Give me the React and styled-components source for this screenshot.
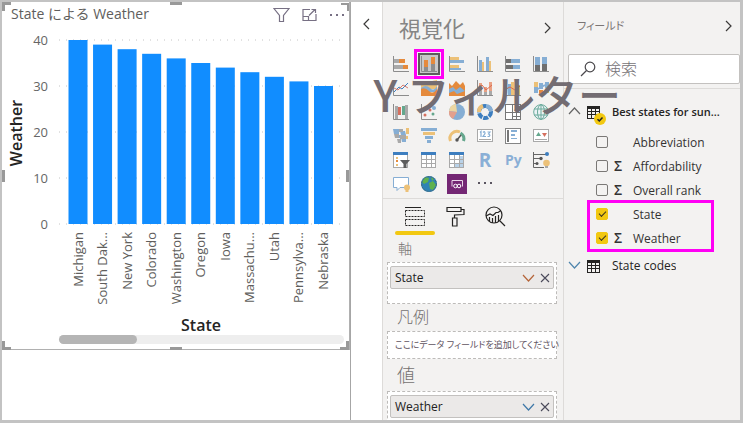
import React from 'react';
import styled, { createGlobalStyle, css } from 'styled-components';

const uiFont = '"Open Sans", "Noto Sans CJK JP", sans-serif';
const line = '#dddbd9';

const GlobalStyle = createGlobalStyle`
  * { box-sizing: border-box; }
  body { margin: 0; font-family: ${uiFont}; font-size: 12px; color: #333; }
  button, input { font: inherit; color: inherit; }
  button { border: 0; padding: 0; background: none; cursor: pointer; }
  svg { display: block; }
`;

const Shell = styled.main`
  position: relative;
  display: grid;
  grid-template-columns: minmax(0, 1fr) 32px 181px 177px;
  height: 100vh;
  border: solid #c3c3c3;
  border-width: 2px 3px 3px 2px;
  background: #fff;
  overflow: hidden;
`;

/* ---------- report canvas ---------- */

const Canvas = styled.section`
  min-width: 0;
`;

const Visual = styled.article`
  position: relative;
  border-right: 1px solid #b0b0b0;
  border-bottom: 1px solid #b0b0b0;
  padding-bottom: 5px;
`;

const VisualHeader = styled.header`
  display: flex;
  align-items: center;
  justify-content: space-between;
  height: 24px;
  padding: 0 4px 0 9px;
`;

const VisualTitle = styled.h2`
  margin: 0;
  font-size: 14px;
  line-height: 20px;
  font-weight: 400;
  color: #605e5c;
  white-space: nowrap;
`;

const VisualTools = styled.div`
  display: flex;
  align-items: center;
  gap: 12px;
  padding-top: 2px;
`;

const Plot = styled.svg`
  width: 100%;
  height: auto;
  font-family: ${uiFont};
`;

const ScrollTrack = styled.div`
  height: 9px;
  margin: 0 5px 0 57px;
  border-radius: 5px;
  background: #eeeeee;
`;

const ScrollThumb = styled.div`
  width: 78px;
  height: 9px;
  border-radius: 5px;
  background: #b5b5b5;
`;

const handlePlace = {
  nw: 'left: 0; top: 0; width: 9px; height: 9px; border-width: 3px 0 0 3px;',
  n: 'left: calc(50% - 6px); top: 0; width: 12px; height: 3px; border-width: 3px 0 0;',
  ne: 'right: 0; top: 1px; width: 8px; height: 8px; border-width: 2px 2px 0 0;',
  w: 'left: 0; top: calc(50% - 6px); width: 3px; height: 12px; border-width: 0 0 0 3px;',
  e: 'right: 0; top: calc(50% - 6px); width: 3px; height: 12px; border-width: 0 3px 0 0;',
  sw: 'left: 0; bottom: -1px; width: 9px; height: 9px; border-width: 0 0 3px 3px;',
  s: 'left: calc(50% - 6px); bottom: -1px; width: 12px; height: 3px; border-width: 0 0 3px;',
  se: 'right: 0; bottom: -1px; width: 9px; height: 9px; border-width: 0 3px 3px 0;',
};

const Handle = styled.span`
  position: absolute;
  border: 0 solid #999;
  ${({ $at }) => handlePlace[$at]}
`;

/* ---------- panes ---------- */

const FilterRail = styled.aside`
  display: flex;
  justify-content: center;
  align-items: flex-start;
  padding-top: 16px;
  border-left: 1px solid #a6a6a6;
`;

const Pane = styled.aside`
  min-width: 0;
  overflow: hidden;
  background: #f3f2f1;
  border-left: 1px solid ${line};
`;

const PaneHeader = styled.header`
  display: flex;
  align-items: center;
  justify-content: space-between;
  height: ${({ $tall }) => ($tall ? 54 : 52)}px;
  padding: 0 ${({ $tall }) => ($tall ? '12px 3px 16px' : '8px 5px 13px')};
  color: ${({ $tall }) => ($tall ? '#858585' : '#7a7574')};
`;

const PaneTitle = styled.h1`
  margin: 0;
  font-size: ${({ $large }) => ($large ? 22 : 11)}px;
  line-height: 24px;
  font-weight: 400;
  font-feature-settings: ${({ $large }) => ($large ? 'normal' : '"palt"')};
  white-space: nowrap;
`;

const FilterTitle = styled.h1`
  position: absolute;
  right: 119px;
  top: 65px;
  margin: 0;
  font-size: 43px;
  line-height: 52px;
  font-weight: 500;
  font-family: "Noto Sans CJK JP", sans-serif;
  color: #736c72;
  white-space: nowrap;
  pointer-events: none;
`;

const IconGrid = styled.div`
  display: grid;
  grid-template-columns: repeat(6, 16px);
  gap: 8px 12px;
  padding: 0 0 6px 10px;
  border-bottom: 1px solid ${line};
`;

const VizButton = styled.button`
  width: 16px;
  height: 16px;
  ${({ $selected }) =>
    $selected &&
    css`
      background: #c8c8c8;
      outline: 2px solid #5c5c5c;
      outline-offset: 1px;
      box-shadow: 0 0 0 1px #c8c8c8, 0 0 0 4px #f3f2f1, 0 0 0 7px #ff00f5;
    `}
`;

const Letters = styled.span`
  display: block;
  font-size: ${({ $big }) => ($big ? 19 : 14)}px;
  line-height: 16px;
  font-weight: 700;
  color: #8aafd6;
  white-space: nowrap;
`;

const Tabs = styled.nav`
  display: flex;
  padding-left: 12px;
`;

const Tab = styled.button`
  display: flex;
  justify-content: center;
  width: 40px;
  height: 36px;
  padding-top: 7px;
  position: relative;
  ${({ $active }) =>
    $active &&
    css`
      &::after {
        content: '';
        position: absolute;
        inset: auto 0 0;
        height: 4px;
        border-radius: 2px;
        background: #f2c811;
      }
    `}
`;

const WellLabel = styled.h3`
  margin: 0;
  padding-left: ${({ $size }) => ($size > 14 ? 14 : 15)}px;
  font-size: ${({ $size }) => $size}px;
  line-height: ${({ $size }) => ($size > 16 ? 32 : 27)}px;
  font-weight: 300;
  color: #757170;
`;

const Well = styled.div`
  margin: 0 6px 0 4px;
  padding: 3px 2px ${({ $empty }) => ($empty ? 3 : 14)}px;
  border: 1px dashed #bdbbb9;
  background: #fff;
`;

const Chip = styled.div`
  display: flex;
  align-items: center;
  height: 23px;
  padding: 0 3px 0 4px;
  border: 1px solid #c3c1bf;
  border-radius: 2px;
  background: #ebe9e8;
  gap: 5px;
`;

const ChipName = styled.span`
  flex: 1;
  color: #222;
`;

const Hint = styled.p`
  margin: 0;
  padding-left: 5px;
  font-size: 9px;
  line-height: 20px;
  font-feature-settings: "palt";
  color: #5f545f;
  white-space: nowrap;
`;

const SearchBox = styled.label`
  display: flex;
  align-items: center;
  gap: 9px;
  height: 30px;
  margin-left: 4px;
  padding-left: 11px;
  border: 1px solid #c3c1bf;
  border-radius: 2px;
  background: #fff;
`;

const SearchInput = styled.input`
  flex: 1;
  min-width: 0;
  border: 0;
  outline: 0;
  padding: 0;
  background: none;
  font-size: 16px;
  line-height: 24px;
  font-weight: 300;
  &::placeholder { color: #767276; opacity: 1; }
`;

const FieldTree = styled.div`
  margin-top: 4px;
  padding-top: 7px;
  border-top: 1px solid ${line};
`;

const TableRow = styled.button`
  display: flex;
  align-items: center;
  width: 100%;
  height: 30px;
  padding-left: 4px;
  color: #252423;
  font-size: ${({ $open }) => ($open ? 11 : 12)}px;
  font-weight: ${({ $open }) => ($open ? 600 : 400)};
`;

const TableIconSlot = styled.span`
  width: 25px;
  margin-left: 6px;
`;

const TableName = styled.span`
  overflow: hidden;
  white-space: nowrap;
  text-overflow: ellipsis;
`;

const FieldList = styled.ul`
  list-style: none;
  margin: 0;
  padding: 4px 0 0;
`;

const FieldGroup = styled.li`
  ${({ $marked }) =>
    $marked &&
    css`
      width: 123px;
      margin-left: 25px;
      outline: 3px solid #ff00f5;
      outline-offset: -1px;
      & > label { padding-left: 7px; }
    `}
`;

const FieldRow = styled.label`
  display: grid;
  grid-template-columns: 12px 25px 1fr;
  align-items: center;
  height: 24px;
  padding-left: 32px;
  color: #333;
  white-space: nowrap;
`;

const Tick = styled.input`
  appearance: none;
  position: relative;
  width: 12px;
  height: 12px;
  margin: 0;
  border: 1px solid #7a7876;
  border-radius: 2px;
  &:checked {
    border-color: #f2c811;
    background: #f2c811;
  }
  &:checked::after {
    content: '';
    position: absolute;
    left: 2px;
    top: 2px;
    width: 6px;
    height: 3px;
    border: solid #3a3420;
    border-width: 0 0 1px 1px;
    transform: rotate(-45deg);
  }
`;

const Sigma = styled.span`
  padding-left: 6px;
  font: 600 14px/24px "Open Sans", sans-serif;
  color: #333;
`;

/* ---------- drawings ---------- */

const Chevron = ({ dir, color = '#3b3a39', w = 7, h = 12 }) => {
  const d = {
    left: `M${w - 1} 1L1 ${h / 2}L${w - 1} ${h - 1}`,
    right: `M1 1L${w - 1} ${h / 2}L1 ${h - 1}`,
    up: `M1 ${h - 1}L${w / 2} 1L${w - 1} ${h - 1}`,
    down: `M1 1L${w / 2} ${h - 1}L${w - 1} 1`,
  }[dir];
  return (
    <svg width={w} height={h} fill="none" stroke={color} strokeWidth="1.2">
      <path d={d} />
    </svg>
  );
};

const FunnelIcon = () => (
  <svg width="17" height="16" fill="none" stroke="#777084" strokeWidth="1.2">
    <path d="M1 1.5H16L10.500 8.500V14.500H6.500V8.500Z" />
  </svg>
);
const FocusIcon = () => (
  <svg width="15" height="14" fill="none" stroke="#777084" strokeWidth="1.2">
    <path d="M8 1.500H1V12.500H14V6M1 8.500H6.500V12.500M7 7.500L13 1.500M9.500 1.500H13.500V5" />
  </svg>
);
const MoreIcon = () => (
  <svg width="16" height="4" fill="#777084">
    <path d="M1 1h2v2H1zM7 1h2v2H7zM13 1h2v2h-2z" />
  </svg>
);
const CloseIcon = () => (
  <svg width="10" height="10" fill="none" stroke="#4a4a5a" strokeWidth="1.1">
    <path d="M1 1L9 9M9 1L1 9" />
  </svg>
);
const SearchIcon = () => (
  <svg width="16" height="16" fill="none" stroke="#4a484c" strokeWidth="1.2">
    <circle cx="10" cy="6" r="4.800" />
    <path d="M6.500 9.500L1 15" />
  </svg>
);
const TableIcon = ({ badge }) => (
  <svg width="20" height="24" viewBox="0 -3 20 24" overflow="visible">
    <path fill="#252423" d="M0 4h13v13H0z" />
    <path fill="#f3f2f1" d="M1 7h3v2H1zM5 7h3v2H5zM9 7h3v2H9zM1 10h3v2H1zM5 10h3v2H5zM9 10h3v2H9zM1 13h3v3H1zM5 13h3v3H5zM9 13h3v3H9z" />
    {badge && (
      <>
        <circle cx="13" cy="17" r="6" fill="#f2c811" />
        <path d="M10.500 17.200L12.300 19L15.500 15.500" fill="none" stroke="#252423" strokeWidth="1.500" />
      </>
    )}
  </svg>
);

const O = '#e58a3c';
const B = '#86aed4';
const Y = '#ecc178';
const G = '#a9a9a9';
const D = '#6f6f6f';
const K = '#3d7ebf';
const Axis = () => <path d="M.5 0V15.500H16" fill="none" stroke="#8c8c8c" />;
const P = ({ f, d }) => <path fill={f} d={d} />;
const S = ({ s, d, w = 1 }) => <path fill="none" stroke={s} strokeWidth={w} d={d} />;

const vizIcons = [
  ['積み上げ横棒', <><Axis /><P f={G} d="M1 3h5v4H1zM1 9h9v4H1z" /><P f={O} d="M6 3h6v4H6zM10 9h5v4h-5z" /></>],
  ['積み上げ縦棒', <><Axis /><P f="#8d8d8d" d="M3 11h4v4H3zM10 7h4v8h-4z" /><P f={O} d="M3 4h4v7H3zM10 1h4v7h-4z" /></>],
  ['集合横棒', <><Axis /><P f={Y} d="M1 1h9v3H1zM1 9h9v3H1z" /><P f={B} d="M1 4h14v3H1zM1 12h11v2H1z" /></>],
  ['集合縦棒', <><Axis /><P f={B} d="M2 4h3v11H2zM9 1h3v14H9z" /><P f={Y} d="M5 6h2v9H5zM12 5h2v10h-2z" /></>],
  ['100% 横棒', <><Axis /><P f={D} d="M1 3h5v4H1zM1 9h7v4H1z" /><P f={B} d="M6 3h9v4H6zM8 9h7v4H8z" /></>],
  ['100% 縦棒', <><Axis /><P f={B} d="M2 1h5v9H2zM9 1h5v7H9z" /><P f={D} d="M2 9h5v6H2zM9 8h5v7H9z" /></>],
  ['折れ線', <><Axis /><S s={K} d="M1 12L6 7L9 9L15 3" /><S s="#db7b6b" d="M1 8L5 10L10 5L15 8" /></>],
  ['面', <><P f={Y} d="M0 3Q4 6 8 3T16 0V9H0z" /><P f={B} d="M0 8Q5 4 9 8T16 6V12H0z" /><P f={O} d="M0 9Q4 7 8 11T16 9V16H0z" /></>],
  ['積み上げ面', <><P f={O} d="M0 3L3 6L7 1L11 5L14 2L16 6V16H0z" /><P f={B} d="M0 9L4 7L7 10L11 7L16 11V16H0z" /><P f={O} d="M0 13L5 11L8 14L16 11V16H0z" /></>],
  ['折れ線と積み上げ縦棒', <><Axis /><P f="#e9a184" d="M2 3h3v8H2zM7 7h3v5H7zM12 2h3v9h-3z" /><P f={G} d="M2 11h3v4H2zM7 12h3v3H7zM12 11h3v4h-3z" /><S s="#dd6b4e" d="M1 8L5 5L9 10L15 5" /></>],
  ['折れ線と集合縦棒', <><Axis /><P f={B} d="M3 4h3v11H3zM10 7h3v8h-3z" /><P f={Y} d="M6 2h3v13H6zM13 5h2v10h-2z" /><S s="#dd6b4e" d="M1 9L5 7L10 10L15 6" /></>],
  ['リボン', <><P f={Y} d="M1 2h4v5H1zM12 8h4v5h-4z" /><P f={B} d="M1 7h4v6H1zM6 3h4v6H6zM12 2h4v6h-4z" /><P f={O} d="M6 10h4v5H6z" /><S s={B} w={2} d="M5 9L12 5" /></>],
  ['ウォーターフォール', <><Axis /><P f={G} d="M2 2h3v13H2zM12 1h3v14h-3z" /><P f="#d5705f" d="M5 3h3v8H5z" /><P f="#65a78d" d="M9 2h3v9H9z" /></>],
  ['散布図', <><Axis /><g fill="#65a78d"><circle cx="4" cy="4" r="1.500" /><circle cx="12" cy="10" r="1.500" /></g><g fill="#d5705f"><circle cx="9" cy="6" r="1.500" /><circle cx="4" cy="11" r="1.500" /></g><circle cx="13" cy="4" r="2" fill={B} /></>],
  ['円', <><circle cx="8" cy="8" r="8" fill={B} /><P f="#ecd6a2" d="M8 8L7 0A8 8 0 0 0 0 7z" /><P f="#e3a08d" d="M8 8L0 7A8 8 0 0 0 4 15z" /></>],
  ['ドーナツ', <><circle cx="8" cy="8" r="6" fill="none" stroke={K} strokeWidth="4" strokeDasharray="5 1" /><S s={Y} w={4} d="M2 8A6 6 0 0 1 6 2" /><S s={B} w={4} d="M9 2A6 6 0 0 1 14 7" /></>],
  ['ツリーマップ', <><rect x=".5" y=".5" width="15" height="15" fill="#fff" stroke="#777" /><S s="#777" d="M7.500 0V16M0 8.500H16M11.500 8V16M7 12.500H16" /></>],
  ['マップ', <><circle cx="8" cy="8" r="7.300" fill="#eaf2f5" stroke="#6aaa9b" /><ellipse cx="8" cy="8" rx="3.500" ry="7.300" fill="none" stroke="#6aaa9b" /><S s="#6aaa9b" d="M1 5H15M1 11H15M8 0V16" /></>],
  ['塗り分け地図', <><P f={B} d="M0 1h6v5H1zM7 3h5l1 4H8zM3 7h4v3H3zM8 9h5v5H9z" /><P f={G} d="M6 1h4v3H6zM1 6h5v4H2zM7 7h6v4H7zM4 11h4v4H5z" /><P f={Y} d="M13 0h3v6h-3zM13 8h2v3h-2z" /></>],
  ['じょうご', <><P f={B} d="M0 0h16v3H0zM4 8h8v3H4zM6 12h4v3H6z" /><P f={Y} d="M2 4h12v3H2z" /></>],
  ['ゲージ', <><S s={Y} w={3} d="M1.500 13A7 7 0 0 1 11 4" /><S s="#65a78d" w={3} d="M11.500 5A7 7 0 0 1 14.500 13" /><S s="#555" w={1.500} d="M8 12L12 7" /><circle cx="8" cy="12" r="1.700" fill="#555" /></>],
  ['カード', <><rect x=".5" y="1.500" width="15" height="12" fill="#fff" stroke={G} /><S s={B} w={1.200} d="M3 4.500L4 3.500V9M6 4.500Q8 2.500 8 5.500L6 8.500H9M10.500 4H13L11.500 6Q14 7 12 8.500H10.500" /><S s={G} d="M2 11.500H14" /></>],
  ['複数の行カード', <><rect x=".5" y=".5" width="15" height="15" fill="#fff" stroke="#858585" /><P f="#777" d="M2 2h2v12H2z" /><P f={B} d="M6 2h6v2H6zM6 6h4v2H6zM6 10h6v1H6z" /></>],
  ['KPI', <><rect x=".5" y="1.500" width="15" height="12" fill="#fff" stroke={G} /><P f="#65a78d" d="M3 8L5.500 4L8 8z" /><P f="#d5705f" d="M9 5h5l-2.500 4z" /><S s={G} d="M2 11.500H14" /></>],
  ['スライサー', <><rect x=".5" y=".5" width="14" height="15" fill="#fff" stroke={G} /><P f={K} d="M0 0h15v3H0z" /><P f={Y} d="M3 5h2v2H3zM3 12h2v2H3z" /><P f={O} d="M3 8h2v2H3z" /><P f="#5d5d5d" d="M7 8h10l-3.500 4V16h-3v-4z" /></>],
  ['テーブル', <><rect x=".5" y=".5" width="14" height="15" fill="#fff" stroke={G} /><P f={K} d="M0 0h15v3H0z" /><S s={G} d="M5.500 3V16M10.500 3V16M1 7.500H15M1 11.500H15" /></>],
  ['マトリックス', <><rect x=".5" y=".5" width="14" height="15" fill="#fff" stroke={G} /><P f={K} d="M0 0h15v3H0z" /><P f="#b9d2e8" d="M10 4h4v11h-4zM5 12h9v3H5z" /><S s={G} d="M5.500 3V16M10.500 3V16M1 7.500H15M1 11.500H15" /></>],
  ['R', 'R'],
  ['Py', 'Py'],
  ['主要なインフルエンサー', <><S s="#666" d="M.5 0V15.500H11M1 2.500H13M1 6.500H8M1 11.500H5" /><circle cx="14" cy="2" r="2" fill={K} /><circle cx="8" cy="6.500" r="1.700" fill="#555" /><circle cx="4" cy="11.500" r="1.500" fill="#555" /><circle cx="13.500" cy="11" r="3.300" fill={Y} /><P f={G} d="M12 14h3v2h-3z" /></>],
  ['Q&A', <><path d="M.5 1.500H15.500V11.500H7L4 14.500V11.500H.5z" fill="#fff" stroke={B} /><circle cx="14" cy="11.500" r="3" fill={Y} /><P f={Y} d="M12.500 13h3v3h-3z" /></>],
  ['ArcGIS マップ', <><circle cx="8" cy="8" r="8" fill="#2f83b5" /><P f="#5fb14e" d="M4 1l4 1-1 4-4 2-2-2zM8 7l4-2 3 4-3 5-3-1zM10 1l3 2-2 2z" /><circle cx="8" cy="8" r="7.400" fill="none" stroke="#46687c" strokeDasharray="2 1" /></>],
  ['Power Apps', <><path fill="#742774" d="M-2 -2h20v20H-2z" /><path d="M3 10.500V4.500H13.500V10.500" fill="none" stroke="#e9d6e9" /><circle cx="6.500" cy="10" r="1.800" fill="none" stroke="#fff" /><circle cx="10" cy="10" r="1.800" fill="none" stroke="#fff" /></>],
  ['その他', <P f="#5a5560" d="M1 6h2v2H1zM7 6h2v2H7zM13 6h2v2h-2z" />],
];

const FieldsTabIcon = () => (
  <svg width="20" height="21" fill="none" stroke="#252423">
    <path d="M0 1.500H16" />
    <path strokeDasharray="2 1" d="M.5 4.500H19.500V10.500H.5ZM.5 13.500H19.500V19.500H.5Z" />
  </svg>
);
const FormatTabIcon = () => (
  <svg width="19" height="21" fill="none" stroke="#252423" strokeWidth="1.200">
    <path d="M1 1.500H15V5.500H1ZM15 3.500H18V8.500L8.500 9V12" />
    <path d="M6.500 12H11V20H6.500Z" />
  </svg>
);
const AnalyticsTabIcon = () => (
  <svg width="21" height="21" fill="none" stroke="#252423" strokeWidth="1.200">
    <circle cx="9" cy="9" r="8" />
    <path d="M15 15L20 20M1 10L5 8L8 9.500L11 6.500H13L16 4.500M4.500 11V15.500M7.500 12V17M10.500 10V17M13.500 9V15.500" />
  </svg>
);

/* ---------- chart ---------- */

const weather = [
  ['Michigan', 40], ['South Dak...', 39], ['New York', 38], ['Colorado', 37],
  ['Washington', 36], ['Oregon', 35], ['Iowa', 34], ['Massachu...', 33],
  ['Utah', 32], ['Pennsylva...', 31], ['Nebraska', 30],
];

const WeatherChart = () => {
  const y = (v) => 198 - v * 4.6;
  return (
    <Plot viewBox="0 0 347 309" role="img" aria-label="State による Weather">
      {[0, 10, 20, 30, 40].map((v) => (
        <g key={v}>
          <line x1="57" x2="342" y1={y(v)} y2={y(v)} stroke="#c4c4c4" strokeDasharray="1 6" />
          <text x="46" y={y(v) + 5} textAnchor="end" fontSize="13" fill="#666">{v}</text>
        </g>
      ))}
      {weather.map(([name, v], i) => {
        const x = 66.5 + i * 24.55;
        return (
          <g key={name}>
            <rect x={x} y={y(v)} width="19" height={v * 4.6} fill="#118dff" />
            <text transform={`translate(${x + 14} 206) rotate(-90)`} textAnchor="end" fontSize="13" fill="#605e5c">{name}</text>
          </g>
        );
      })}
      <text transform="translate(20 107) rotate(-90)" textAnchor="middle" fontSize="16" fontWeight="600" fill="#252423">Weather</text>
      <text x="199" y="305" textAnchor="middle" fontSize="16" fontWeight="600" fill="#252423">State</text>
    </Plot>
  );
};

const Field = ({ name, sum, checked }) => (
  <FieldRow>
    <Tick type="checkbox" defaultChecked={checked} />
    <Sigma aria-hidden="true">{sum ? 'Σ' : ''}</Sigma>
    {name}
  </FieldRow>
);

const WellChip = ({ name, color }) => (
  <Chip>
    <ChipName>{name}</ChipName>
    <button aria-label={`${name} のオプション`}><Chevron dir="down" w={13} h={8} color={color} /></button>
    <button aria-label={`${name} を削除`}><CloseIcon /></button>
  </Chip>
);

export default function App() {
  return (
    <>
      <GlobalStyle />
      <Shell>
        <Canvas>
          <Visual>
            <VisualHeader>
              <VisualTitle>State による Weather</VisualTitle>
              <VisualTools>
                <button aria-label="フィルター"><FunnelIcon /></button>
                <button aria-label="フォーカス モード"><FocusIcon /></button>
                <button aria-label="その他のオプション"><MoreIcon /></button>
              </VisualTools>
            </VisualHeader>
            <WeatherChart />
            <ScrollTrack><ScrollThumb /></ScrollTrack>
            {Object.keys(handlePlace).map((at) => <Handle key={at} $at={at} />)}
          </Visual>
        </Canvas>

        <FilterRail>
          <button aria-label="フィルターを展開"><Chevron dir="left" /></button>
        </FilterRail>

        <Pane>
          <PaneHeader $tall>
            <PaneTitle $large>視覚化</PaneTitle>
            <button aria-label="視覚化を折りたたむ"><Chevron dir="right" /></button>
          </PaneHeader>
          <IconGrid>
            {vizIcons.map(([label, art], i) => (
              <VizButton key={label} aria-label={label} $selected={i === 1}>
                {typeof art === 'string'
                  ? <Letters $big={art === 'R'}>{art}</Letters>
                  : <svg width="16" height="16" overflow="visible">{art}</svg>}
              </VizButton>
            ))}
          </IconGrid>
          <Tabs>
            <Tab $active aria-label="フィールド"><FieldsTabIcon /></Tab>
            <Tab aria-label="書式"><FormatTabIcon /></Tab>
            <Tab aria-label="分析"><AnalyticsTabIcon /></Tab>
          </Tabs>
          <WellLabel $size={14}>軸</WellLabel>
          <Well><WellChip name="State" color="#b5653a" /></Well>
          <WellLabel $size={16}>凡例</WellLabel>
          <Well $empty><Hint>ここにデータ フィールドを追加してください</Hint></Well>
          <WellLabel $size={18}>値</WellLabel>
          <Well><WellChip name="Weather" color="#3f78a8" /></Well>
        </Pane>

        <Pane>
          <PaneHeader>
            <PaneTitle>フィールド</PaneTitle>
            <button aria-label="フィールドを折りたたむ"><Chevron dir="right" /></button>
          </PaneHeader>
          <SearchBox>
            <SearchIcon />
            <SearchInput type="text" aria-label="検索" placeholder="検索" />
          </SearchBox>
          <FieldTree>
            <TableRow $open>
              <Chevron dir="up" w={13} h={8} color="#666" />
              <TableIconSlot><TableIcon badge /></TableIconSlot>
              <TableName>Best states for sun...</TableName>
            </TableRow>
            <FieldList>
              <FieldGroup><Field name="Abbreviation" /></FieldGroup>
              <FieldGroup><Field name="Affordability" sum /></FieldGroup>
              <FieldGroup><Field name="Overall rank" sum /></FieldGroup>
              <FieldGroup $marked>
                <Field name="State" checked />
                <Field name="Weather" sum checked />
              </FieldGroup>
            </FieldList>
            <TableRow>
              <Chevron dir="down" w={13} h={8} color="#4f86ad" />
              <TableIconSlot><TableIcon /></TableIconSlot>
              <TableName>State codes</TableName>
            </TableRow>
          </FieldTree>
        </Pane>

        <FilterTitle>Y フィルター</FilterTitle>
      </Shell>
    </>
  );
}
